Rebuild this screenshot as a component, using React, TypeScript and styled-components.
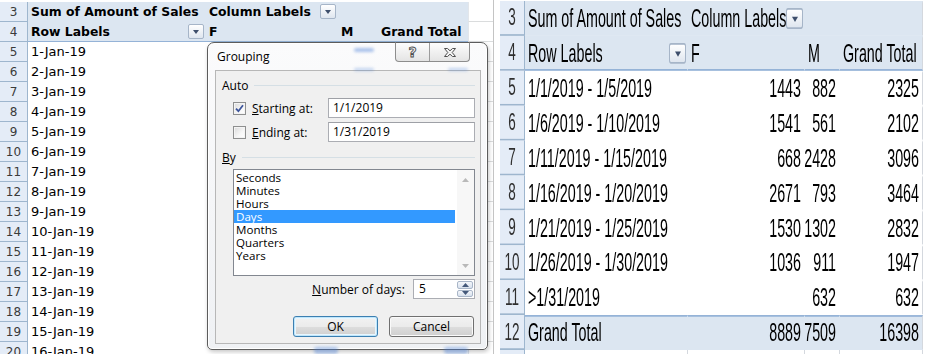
import styled, { createGlobalStyle } from "styled-components";

const GlobalStyle = createGlobalStyle`
  html, body {
    margin: 0;
    padding: 0;
    background: #ffffff;
  }
  body {
    overflow: hidden;
  }
`;

const Page = styled.div`
  display: flex;
  align-items: flex-start;
  width: 926px;
  height: 354px;
  overflow: hidden;
  background: #ffffff;
`;

/* ---------- left sheet (excel at 100%) ---------- */

const LeftSheet = styled.div`
  position: relative;
  flex: none;
  width: 494px;
  height: 354px;
  box-sizing: border-box;
  padding-top: 2px;
  border-right: 1px solid #c4c4c4;
  font-family: "DejaVu Sans", Verdana, sans-serif;
  color: #000;
`;

const LRow = styled.div`
  display: grid;
  grid-template-columns: 28px 178px 132px 40px 90px 25px;
  height: 20px;
`;

const LNum = styled.div`
  box-sizing: border-box;
  display: flex;
  align-items: center;
  justify-content: center;
  background: #e4ecf7;
  border-right: 1px solid #9eb6ce;
  border-bottom: 1px solid #9eb6ce;
  color: #3b3b3b;
  font-size: 12px;
`;

const LCell = styled.div<{ $head?: boolean; $line?: boolean; $bold?: boolean }>`
  box-sizing: border-box;
  display: flex;
  align-items: center;
  justify-content: space-between;
  padding: 0 2px 0 3px;
  white-space: nowrap;
  font-size: ${(p) => (p.$bold ? "12.4px" : "13px")};
  font-weight: ${(p) => (p.$bold ? 700 : 400)};
  background: ${(p) => (p.$head ? "#dce6f1" : "transparent")};
  border-bottom: 1px solid ${(p) => (p.$line ? "#95b3d7" : "transparent")};
`;

const LSpare = styled.div`
  box-sizing: border-box;
  border-bottom: 1px solid #dadcdd;
  border-left: 1px solid #e3e6ea;
`;

const FilterBtn = styled.span<{ $h: number; $w?: number; $arrow?: number }>`
  flex: none;
  width: ${(p) => p.$w ?? 16}px;
  height: ${(p) => p.$h}px;
  box-sizing: border-box;
  display: flex;
  align-items: center;
  justify-content: center;
  border: 1px solid #a6b5c8;
  border-radius: 2px;
  background: linear-gradient(#ffffff, #dfe6ef);
  &::after {
    content: "";
    border-left: 3.5px solid transparent;
    border-right: 3.5px solid transparent;
    border-top: ${(p) => p.$arrow ?? 4}px solid #3d4e6b;
  }
`;

/* ---------- grouping dialog ---------- */

const Dialog = styled.div`
  position: absolute;
  left: 207px;
  top: 42px;
  width: 281px;
  height: 308px;
  box-sizing: border-box;
  display: flex;
  flex-direction: column;
  padding: 0 6px 5px 7px;
  border: 1px solid #5c5c5c;
  border-radius: 7px 7px 5px 5px;
  background: linear-gradient(#fbfbfc, #eff1f4);
  box-shadow: inset 0 0 0 1px #ffffff, 1px 2px 4px rgba(0, 0, 0, 0.22);
  font-family: "Open Sans", "Noto Sans", sans-serif;
  font-size: 12px;
  color: #000;
`;

const Glint = styled.span<{ $x: number; $y: number; $w: number; $h: number; $a: number }>`
  position: absolute;
  left: ${(p) => p.$x}px;
  top: ${(p) => p.$y}px;
  width: ${(p) => p.$w}px;
  height: ${(p) => p.$h}px;
  border-radius: 3px;
  background: rgba(70, 125, 215, ${(p) => p.$a});
  filter: blur(1.6px);
`;

const TitleBar = styled.div`
  height: 27px;
  display: flex;
  align-items: flex-start;
  justify-content: space-between;
`;

const Title = styled.span`
  margin: 6px 0 0 2px;
  line-height: 16px;
`;

const CaptionGroup = styled.div`
  display: flex;
  height: 20px;
  margin: -1px 11px 0 0;
  box-sizing: border-box;
  border: 1px solid #8d8d8d;
  border-top-color: #5c5c5c;
  border-radius: 0 0 4px 4px;
  overflow: hidden;
  background: linear-gradient(#fdfdfd, #e4e4e4);
`;

const CaptionBtn = styled.div<{ $w: number }>`
  width: ${(p) => p.$w}px;
  display: flex;
  align-items: center;
  justify-content: center;
  & + & {
    border-left: 1px solid #9c9c9c;
  }
`;

const HelpGlyph = styled.span`
  font-family: "DejaVu Sans", sans-serif;
  font-size: 14px;
  font-weight: 700;
  line-height: 14px;
  color: #f2f2f2;
  -webkit-text-stroke: 0.9px #4d4d4d;
`;

const Client = styled.div`
  flex: 1;
  display: flex;
  flex-direction: column;
  border: 1px solid #b7b7b7;
  background: #f0f0f0;
`;

const GroupHead = styled.div<{ $top: number }>`
  display: flex;
  align-items: center;
  gap: 6px;
  height: 14px;
  margin: ${(p) => p.$top}px 5px 0 6px;
  &::after {
    content: "";
    flex: 1;
    height: 1px;
    background: #d5dfe5;
  }
`;

const CheckRow = styled.div<{ $top: number }>`
  display: flex;
  align-items: center;
  height: 20px;
  margin: ${(p) => p.$top}px 5px 0 17px;
`;

const CheckBox = styled.span`
  flex: none;
  width: 13px;
  height: 13px;
  box-sizing: border-box;
  display: flex;
  align-items: center;
  justify-content: center;
  border: 1px solid #8e8f8f;
  background: linear-gradient(135deg, #d9d9d9, #f7f7f7 60%, #ffffff);
  box-shadow: inset 0 0 0 1px #f4f4f4;
`;

const CheckLabel = styled.span`
  width: 76px;
  margin-left: 6px;
`;

const Key = styled.u`
  text-decoration: underline;
`;

const TextInput = styled.div<{ $w: number }>`
  width: ${(p) => p.$w}px;
  height: 20px;
  box-sizing: border-box;
  border: 1px solid #abadb3;
  border-top-color: #9ea0a6;
  background: #ffffff;
  padding-left: 4px;
  line-height: 18px;
`;

const ListBox = styled.div`
  display: flex;
  height: 107px;
  margin: 5px 5px 0 17px;
  box-sizing: border-box;
  border: 1px solid #828790;
  background: #ffffff;
`;

const ListItems = styled.ul`
  flex: 1;
  margin: 0;
  padding: 1px 0 0;
  list-style: none;
`;

const ListItem = styled.li<{ $selected?: boolean }>`
  height: 13px;
  line-height: 13px;
  margin-right: 2px;
  padding-left: 2px;
  font-size: 11.6px;
  background: ${(p) => (p.$selected ? "#3399ff" : "transparent")};
  color: ${(p) => (p.$selected ? "#ffffff" : "#000000")};
`;

const ScrollBar = styled.div`
  width: 17px;
  display: flex;
  flex-direction: column;
  align-items: center;
  justify-content: space-between;
  padding: 8px 0 7px;
  box-sizing: border-box;
  background: #f7f7f7;
`;

const NumberRow = styled.div`
  display: flex;
  align-items: center;
  justify-content: flex-end;
  gap: 8px;
  height: 20px;
  margin: 3px 5px 0 0;
`;

const Spin = styled.div`
  display: flex;
  width: 62px;
  height: 20px;
  box-sizing: border-box;
  border: 1px solid #abadb3;
  background: #ffffff;
`;

const SpinValue = styled.span`
  flex: 1;
  padding-left: 5px;
  line-height: 18px;
`;

const SpinButtons = styled.div`
  width: 18px;
  display: flex;
  flex-direction: column;
  gap: 1px;
  padding: 1px;
  box-sizing: border-box;
`;

const SpinBtn = styled.div`
  flex: 1;
  display: flex;
  align-items: center;
  justify-content: center;
  border: 1px solid #a9b6c8;
  border-radius: 2px;
  background: linear-gradient(#f4f7fb, #d8e1ed);
`;

const ButtonRow = styled.div`
  display: flex;
  justify-content: flex-end;
  gap: 11px;
  margin: 17px 6px 0 0;
`;

const DlgButton = styled.button<{ $default?: boolean }>`
  width: 85px;
  height: 21px;
  padding: 0;
  font: inherit;
  color: #000;
  border: 1px solid ${(p) => (p.$default ? "#3c7fb1" : "#707070")};
  border-radius: 3px;
  background: linear-gradient(#f2f2f2 0%, #ebebeb 50%, #dddddd 51%, #cfcfcf 100%);
  box-shadow: ${(p) =>
    p.$default ? "inset 0 0 0 1px #bfe6fb, inset 0 0 0 2px #e8f6fe" : "inset 0 0 0 1px #fafafa"};
`;

/* ---------- right sheet (stretched screenshot) ---------- */

const RightSheet = styled.div`
  flex: none;
  width: 423px;
  margin: 1px 0 0 6px;
  transform: scaleY(1.745);
  transform-origin: top left;
  font-family: "Liberation Sans", Arial, sans-serif;
  color: #000;
`;

const RRow = styled.div`
  display: grid;
  grid-template-columns: 25px 163px 117px 35px 83px;
  height: 20px;
`;

const RNum = styled.div`
  box-sizing: border-box;
  display: flex;
  align-items: center;
  justify-content: center;
  background: #e4ecf7;
  border-right: 1px solid #9eb6ce;
  border-bottom: 1px solid #9eb6ce;
  color: #2f2f2f;
  font-size: 13.5px;
`;

const RCell = styled.div<{ $head?: boolean; $line?: "top" | "bottom"; $right?: boolean; $edge?: boolean }>`
  box-sizing: border-box;
  display: flex;
  align-items: center;
  justify-content: ${(p) => (p.$right ? "flex-end" : "space-between")};
  padding: ${(p) => (p.$right ? "0 3px 0 0" : "0 1px 0 3px")};
  white-space: nowrap;
  font-size: 14.3px;
  background: ${(p) => (p.$head ? "#dce6f1" : "transparent")};
  border-top: 1px solid ${(p) => (p.$line === "top" ? "#95b3d7" : "transparent")};
  border-bottom: 1px solid ${(p) => (p.$line === "bottom" ? "#95b3d7" : "transparent")};
  border-right: 1px solid ${(p) => (p.$edge ? "#d4d8de" : "transparent")};
`;

const GridCell = styled.div`
  box-sizing: border-box;
  border-right: 1px solid #d4d8de;
`;

const leftDates = Array.from({ length: 16 }, (_, i) => `${i + 1}-Jan-19`);

const groups = [
  { label: "1/1/2019 - 1/5/2019", f: "1443", m: "882", total: "2325" },
  { label: "1/6/2019 - 1/10/2019", f: "1541", m: "561", total: "2102" },
  { label: "1/11/2019 - 1/15/2019", f: "668", m: "2428", total: "3096" },
  { label: "1/16/2019 - 1/20/2019", f: "2671", m: "793", total: "3464" },
  { label: "1/21/2019 - 1/25/2019", f: "1530", m: "1302", total: "2832" },
  { label: "1/26/2019 - 1/30/2019", f: "1036", m: "911", total: "1947" },
  { label: ">1/31/2019", f: "", m: "632", total: "632" },
];

const periods = ["Seconds", "Minutes", "Hours", "Days", "Months", "Quarters", "Years"];

function CloseIcon() {
  return (
    <svg width="14" height="11" viewBox="0 0 14 11">
      <path
        d="M1.5 1.5h3l2.5 2.3 2.5-2.3h3L9.2 5.5l3.3 4h-3L7 7.2 4.5 9.5h-3l3.3-4z"
        fill="#f4f4f4"
        stroke="#4f4f4f"
        strokeWidth="1"
        strokeLinejoin="round"
      />
    </svg>
  );
}

function Arrow({ up, color }: { up?: boolean; color: string }) {
  return (
    <svg width="7" height="4" viewBox="0 0 7 4">
      <path d={up ? "M0 4L3.5 0L7 4z" : "M0 0L3.5 4L7 0z"} fill={color} />
    </svg>
  );
}

function GroupingDialog() {
  return (
    <Dialog>
      <Glint $x={146} $y={5} $w={20} $h={4} $a={0.45} />
      <Glint $x={146} $y={25} $w={20} $h={3} $a={0.3} />
      <Glint $x={240} $y={25} $w={20} $h={3} $a={0.3} />
      <Glint $x={106} $y={304} $w={24} $h={7} $a={0.4} />
      <Glint $x={236} $y={304} $w={24} $h={7} $a={0.4} />
      <TitleBar>
        <Title>Grouping</Title>
        <CaptionGroup>
          <CaptionBtn $w={33}>
            <HelpGlyph>?</HelpGlyph>
          </CaptionBtn>
          <CaptionBtn $w={39}>
            <CloseIcon />
          </CaptionBtn>
        </CaptionGroup>
      </TitleBar>
      <Client>
        <GroupHead $top={7}>Auto</GroupHead>
        <CheckRow $top={6}>
          <CheckBox>
            <svg width="9" height="9" viewBox="0 0 9 9">
              <path d="M1 4.6L3.4 7.2L8 1.2" fill="none" stroke="#3d559b" strokeWidth="1.8" />
            </svg>
          </CheckBox>
          <CheckLabel>
            <Key>S</Key>tarting at:
          </CheckLabel>
          <TextInput $w={147}>1/1/2019</TextInput>
        </CheckRow>
        <CheckRow $top={4}>
          <CheckBox />
          <CheckLabel>
            <Key>E</Key>nding at:
          </CheckLabel>
          <TextInput $w={147}>1/31/2019</TextInput>
        </CheckRow>
        <GroupHead $top={8}>
          <span>
            <Key>B</Key>y
          </span>
        </GroupHead>
        <ListBox>
          <ListItems>
            {periods.map((p) => (
              <ListItem key={p} $selected={p === "Days"}>
                {p}
              </ListItem>
            ))}
          </ListItems>
          <ScrollBar>
            <Arrow up color="#b9b9b9" />
            <Arrow color="#b9b9b9" />
          </ScrollBar>
        </ListBox>
        <NumberRow>
          <span>
            <Key>N</Key>umber of days:
          </span>
          <Spin>
            <SpinValue>5</SpinValue>
            <SpinButtons>
              <SpinBtn>
                <Arrow up color="#44597a" />
              </SpinBtn>
              <SpinBtn>
                <Arrow color="#44597a" />
              </SpinBtn>
            </SpinButtons>
          </Spin>
        </NumberRow>
        <ButtonRow>
          <DlgButton $default>OK</DlgButton>
          <DlgButton>Cancel</DlgButton>
        </ButtonRow>
      </Client>
    </Dialog>
  );
}

function App() {
  return (
    <Page>
      <GlobalStyle />
      <LeftSheet>
        <LRow>
          <LNum>3</LNum>
          <LCell $head $bold>Sum of Amount of Sales</LCell>
          <LCell $head $bold>
            Column Labels
            <FilterBtn $h={15} />
          </LCell>
          <LCell $head />
          <LCell $head />
          <LSpare />
        </LRow>
        <LRow>
          <LNum>4</LNum>
          <LCell $head $line $bold>
            Row Labels
            <FilterBtn $h={15} />
          </LCell>
          <LCell $head $line $bold>F</LCell>
          <LCell $head $line $bold>M</LCell>
          <LCell $head $line $bold>Grand Total</LCell>
          <LSpare />
        </LRow>
        {leftDates.map((d, i) => (
          <LRow key={d}>
            <LNum>{i + 5}</LNum>
            <LCell>{d}</LCell>
            <LCell />
            <LCell />
            <LCell />
            <LSpare />
          </LRow>
        ))}
        <GroupingDialog />
      </LeftSheet>

      <RightSheet>
        <RRow>
          <RNum>3</RNum>
          <RCell $head>Sum of Amount of Sales</RCell>
          <RCell $head>
            Column Labels
            <FilterBtn $h={12} $w={17} $arrow={3} />
          </RCell>
          <RCell $head />
          <RCell $head $edge />
        </RRow>
        <RRow>
          <RNum>4</RNum>
          <RCell $head $line="bottom">
            Row Labels
            <FilterBtn $h={12} $w={17} $arrow={3} />
          </RCell>
          <RCell $head $line="bottom">F</RCell>
          <RCell $head $line="bottom">M</RCell>
          <RCell $head $line="bottom" $edge>
            Grand Total
          </RCell>
        </RRow>
        {groups.map((g, i) => (
          <RRow key={g.label}>
            <RNum>{i + 5}</RNum>
            <RCell>{g.label}</RCell>
            <RCell $right>{g.f}</RCell>
            <RCell $right>{g.m}</RCell>
            <RCell $right $edge>
              {g.total}
            </RCell>
          </RRow>
        ))}
        <RRow>
          <RNum>12</RNum>
          <RCell $head $line="top">Grand Total</RCell>
          <RCell $head $line="top" $right>8889</RCell>
          <RCell $head $line="top" $right>7509</RCell>
          <RCell $head $line="top" $right $edge>
            16398
          </RCell>
        </RRow>
        <RRow>
          <RNum>13</RNum>
          <GridCell />
          <GridCell />
          <GridCell />
          <GridCell />
        </RRow>
      </RightSheet>
    </Page>
  );
}

export default App;
